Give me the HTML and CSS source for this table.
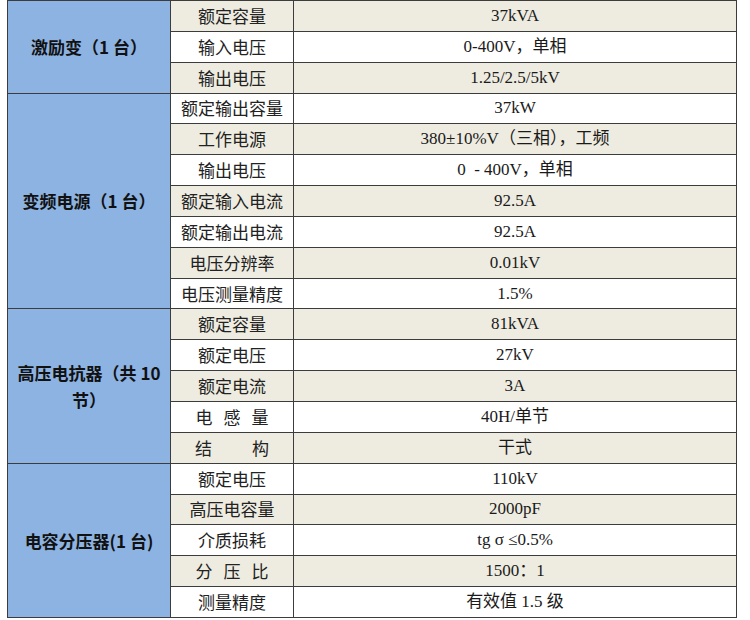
FILE: index.html
```html
<!DOCTYPE html>
<html lang="zh-CN">
<head>
<meta charset="utf-8">
<title>参数表</title>
<link rel="stylesheet" href="styles.css">
</head>
<body>
<table class="spec">
  <colgroup>
    <col class="c-group">
    <col class="c-label">
    <col class="c-value">
  </colgroup>
  <tbody>
    <tr class="alt"><th class="group" rowspan="3">激励变（1 台）</th><td class="label">额定容量</td><td class="value">37kVA</td></tr>
    <tr><td class="label">输入电压</td><td class="value">0-400V，单相</td></tr>
    <tr class="alt"><td class="label">输出电压</td><td class="value">1.25/2.5/5kV</td></tr>

    <tr><th class="group" rowspan="7">变频电源（1 台）</th><td class="label">额定输出容量</td><td class="value">37kW</td></tr>
    <tr class="alt"><td class="label">工作电源</td><td class="value">380±10%V（三相），工频</td></tr>
    <tr><td class="label">输出电压</td><td class="value">0 &nbsp;- 400V，单相</td></tr>
    <tr class="alt"><td class="label">额定输入电流</td><td class="value">92.5A</td></tr>
    <tr><td class="label">额定输出电流</td><td class="value">92.5A</td></tr>
    <tr class="alt"><td class="label">电压分辨率</td><td class="value">0.01kV</td></tr>
    <tr><td class="label">电压测量精度</td><td class="value">1.5%</td></tr>

    <tr class="alt"><th class="group" rowspan="5">高压电抗器（共 10 节）</th><td class="label">额定容量</td><td class="value">81kVA</td></tr>
    <tr><td class="label">额定电压</td><td class="value">27kV</td></tr>
    <tr class="alt"><td class="label">额定电流</td><td class="value">3A</td></tr>
    <tr><td class="label"><span class="spaced">电感量</span></td><td class="value">40H/单节</td></tr>
    <tr class="alt"><td class="label"><span class="wide">结构</span></td><td class="value">干式</td></tr>

    <tr><th class="group" rowspan="5">电容分压器(1 台)</th><td class="label">额定电压</td><td class="value">110kV</td></tr>
    <tr class="alt"><td class="label">高压电容量</td><td class="value">2000pF</td></tr>
    <tr><td class="label">介质损耗</td><td class="value">tg σ ≤0.5%</td></tr>
    <tr class="alt"><td class="label"><span class="spaced">分压比</span></td><td class="value">1500：1</td></tr>
    <tr><td class="label">测量精度</td><td class="value">有效值 1.5 级</td></tr>
  </tbody>
</table>
</body>
</html>
```

FILE: styles.css
```css
html, body {
  margin: 0;
  padding: 0;
  background: #ffffff;
}

body {
  padding-left: 7px;
  font-family: "Liberation Serif", "Noto Sans CJK SC", serif;
  color: #111;
}

.spec {
  border-collapse: collapse;
  table-layout: fixed;
  width: 729px;
  font-size: 16px;
}

.c-group { width: 163px; }
.c-label { width: 123px; }
.c-value { width: 443px; }

.spec tr {
  height: 30.85px;
}

.spec th,
.spec td {
  border: 1px solid #3c3c3c;
  padding: 0;
  text-align: center;
  vertical-align: middle;
  line-height: 20px;
  background: #ffffff;
}

.spec tr.alt td {
  background: #eeece1;
}

.spec th.group {
  background: #8db3e2;
  font-family: "Noto Sans CJK SC", sans-serif;
  font-weight: bold;
  font-size: 17px;
  padding: 0 7px;
  line-height: 27px;
  color: #111;
}

.label {
  font-family: "Noto Sans CJK SC", sans-serif;
  font-size: 17px;
  color: #222;
}

.value {
  font-family: "Liberation Serif", "Noto Sans CJK SC", serif;
  font-size: 17px;
  color: #1a1a1a;
}

.spaced {
  letter-spacing: 11px;
  margin-right: -11px;
}

.wide {
  letter-spacing: 40px;
  margin-right: -40px;
}
```
